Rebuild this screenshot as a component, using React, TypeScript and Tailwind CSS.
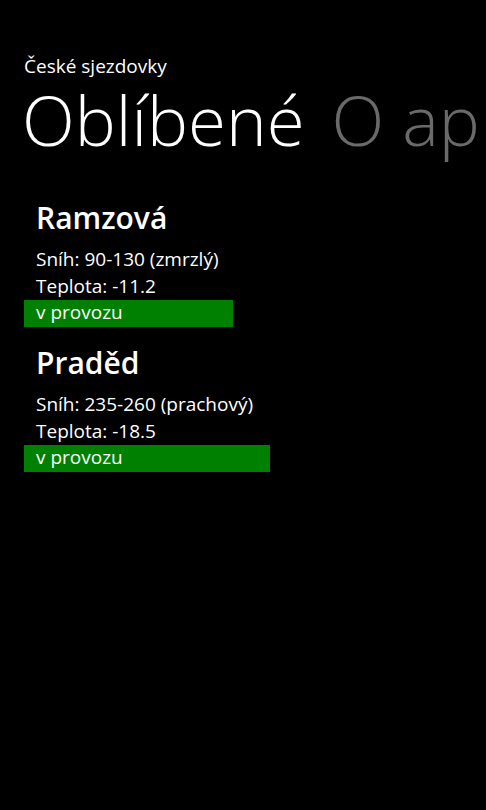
import React from "react";

const items = [
  { name: "Ramzová", snow: "Sníh: 90-130 (zmrzlý)", temp: "Teplota: -11.2", barW: "w-[209px]" },
  { name: "Praděd", snow: "Sníh: 235-260 (prachový)", temp: "Teplota: -18.5", barW: "w-[246px]" },
];

export default function App() {
  return (
    <div
      className="w-[486px] h-[810px] bg-black text-white overflow-hidden"
      style={{ fontFamily: '"Open Sans", "Noto Sans", sans-serif' }}
    >
      <div className="pt-[53px] pl-[24px] text-[19px] leading-[26px]">České sjezdovky</div>
      <div className="flex whitespace-nowrap pl-[22px] mt-[6px] text-[69px] leading-[68px] h-[68px] font-light">
        <span>Oblíbené</span>
        <span className="ml-[27px] text-[#6a6a6a]">O aplikaci</span>
      </div>
      <div className="mt-[47px] flex flex-col gap-[18px]">
        {items.map((it) => (
          <div key={it.name} className="flex flex-col">
            <div className="pl-[36px] text-[30px] leading-[36px] h-[36px] font-semibold">{it.name}</div>
            <div className="pl-[36px] mt-[10px] text-[19px] leading-[27px]">{it.snow}</div>
            <div className="pl-[36px] text-[19px] leading-[27px]">{it.temp}</div>
            <div className={`ml-[24px] ${it.barW} h-[27px] bg-[#008000] pl-[12px] text-[19px] leading-[24px]`}>
              v provozu
            </div>
          </div>
        ))}
      </div>
    </div>
  );
}
